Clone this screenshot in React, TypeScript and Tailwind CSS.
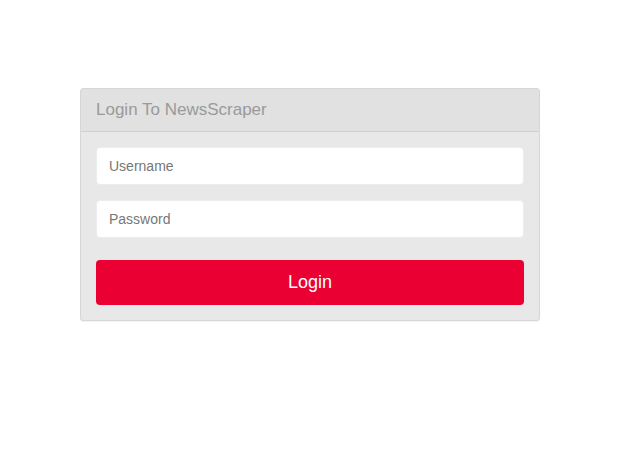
export default function App() {
  return (
    <div className="min-h-[467px] bg-white pt-[88px] pl-[80px]" style={{ fontFamily: '"Liberation Sans", Arial, sans-serif' }}>
      <div className="w-[460px] rounded-[3px] border border-[#d6d6d6] bg-[#e8e8e8] shadow-[0_1px_1px_rgba(0,0,0,0.05)]">
        <div className="h-[43px] border-b border-[#cfcfcf] bg-[#e1e1e1] px-[15px] pt-[11px]">
          <h3 className="text-[17px] leading-[20px] text-[#9a9a9a]">Login To NewsScraper</h3>
        </div>
        <form className="flex flex-col p-[15px]">
          <input
            type="text"
            placeholder="Username"
            className="h-[38px] rounded-[4px] border border-[#ececec] bg-white px-[12px] text-[14px] text-[#555] placeholder:text-[#777] outline-none"
          />
          <input
            type="password"
            placeholder="Password"
            className="mt-[15px] h-[38px] rounded-[4px] border border-[#ececec] bg-white px-[12px] text-[14px] text-[#555] placeholder:text-[#777] outline-none"
          />
          <button
            type="button"
            className="mt-[22px] h-[45px] rounded-[4px] bg-[#ea0032] text-[18px] text-white"
          >
            Login
          </button>
        </form>
      </div>
    </div>
  );
}
